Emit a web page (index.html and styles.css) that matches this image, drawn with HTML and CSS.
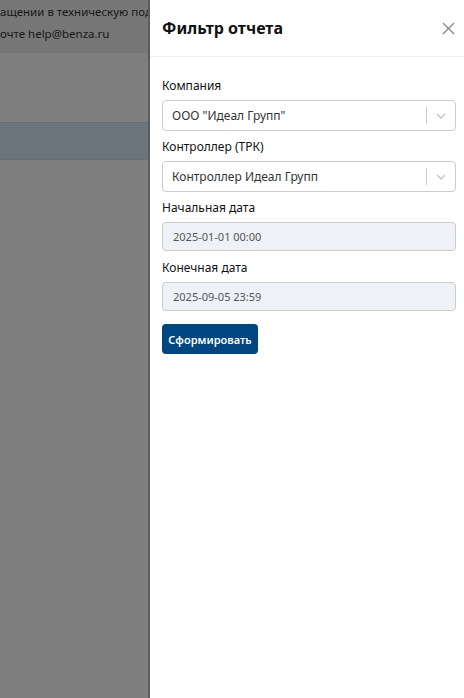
FILE: index.html
```html
<!DOCTYPE html>
<html lang="ru">
<head>
<meta charset="utf-8">
<link rel="stylesheet" href="styles.css">
</head>
<body>
<div class="page">
  <div class="notice">
    <div class="notice-line">ащении в техническую под</div>
    <div class="notice-line">очте help@benza.ru</div>
  </div>
  <div class="page-gap"></div>
  <div class="page-row"></div>
</div>
<div class="overlay"></div>
<aside class="drawer">
  <header class="drawer-head">
    <h1 class="drawer-title">Фильтр отчета</h1>
    <button class="close" aria-label="Закрыть">
      <svg width="14" height="14" viewBox="0 0 14 14"><path d="M1 1L13 13M13 1L1 13" stroke="#8c8c8c" stroke-width="1.5" fill="none"/></svg>
    </button>
  </header>
  <form class="drawer-body">
    <div class="field">
      <label class="label">Компания</label>
      <div class="select">
        <span class="select-value">ООО "Идеал Групп"</span>
        <span class="select-sep"></span>
        <span class="select-arrow"><svg width="10" height="6" viewBox="0 0 10 6"><path d="M1 1L5 5L9 1" stroke="#c4c4c4" stroke-width="1.3" fill="none"/></svg></span>
      </div>
    </div>
    <div class="field">
      <label class="label">Контроллер (ТРК)</label>
      <div class="select">
        <span class="select-value">Контроллер Идеал Групп</span>
        <span class="select-sep"></span>
        <span class="select-arrow"><svg width="10" height="6" viewBox="0 0 10 6"><path d="M1 1L5 5L9 1" stroke="#c4c4c4" stroke-width="1.3" fill="none"/></svg></span>
      </div>
    </div>
    <div class="field">
      <label class="label">Начальная дата</label>
      <div class="input">2025-01-01 00:00</div>
    </div>
    <div class="field">
      <label class="label">Конечная дата</label>
      <div class="input">2025-09-05 23:59</div>
    </div>
    <div class="actions">
      <button type="button" class="submit">Сформировать</button>
    </div>
  </form>
</aside>
</body>
</html>
```
FILE: styles.css
```css
* { box-sizing: border-box; }
html, body { margin: 0; padding: 0; height: 100%; }
body {
  font-family: "Noto Sans", "Open Sans", sans-serif;
  background: #ffffff;
  overflow: hidden;
  position: relative;
}
.page { display: flex; flex-direction: column; width: 148px; }
.notice {
  background: #eeeeee;
  height: 53px;
  padding-top: 1px;
  color: #333333;
  font-size: 11.5px;
  line-height: 22px;
}
.notice-line {
  white-space: nowrap;
  overflow: hidden;
}
.page-gap { height: 69px; }
.page-row { height: 38px; background: #d8e8f8; border-top: 1px solid #cfdbe8; border-bottom: 1px solid #cfdbe8; }
.overlay {
  position: absolute;
  inset: 0;
  background: rgba(0, 0, 0, 0.5);
}
.drawer {
  position: absolute;
  top: 0;
  right: 0;
  bottom: 0;
  width: 316px;
  background: #ffffff;
  border-left: 2px solid #5c5c5c;
  display: flex;
  flex-direction: column;
}
.drawer-head {
  height: 57px;
  border-bottom: 1px solid #f0f0f0;
  display: flex;
  align-items: center;
  justify-content: space-between;
  padding: 0 9px 0 12px;
}
.drawer-title {
  margin: 0;
  font-size: 16px;
  font-weight: 700;
  color: #111111;
}
.close {
  background: none;
  border: 0;
  padding: 0;
  width: 13px;
  height: 13px;
  display: flex;
  cursor: pointer;
}
.close svg { width: 13px; height: 13px; }
.drawer-body {
  padding: 20px 8px 0 12px;
  display: flex;
  flex-direction: column;
}
.field { display: flex; flex-direction: column; }
.label {
  font-size: 12px;
  color: #111111;
  line-height: 17px;
  height: 23px;
}
.select {
  height: 31px;
  border: 1px solid #cccccc;
  border-radius: 4px;
  display: flex;
  align-items: center;
  padding-left: 9px;
  margin-bottom: 7px;
}
.select-value { flex: 1; font-size: 12px; color: #333333; }
.select-sep { width: 1px; height: 17px; background: #cccccc; }
.select-arrow { width: 28px; display: flex; justify-content: center; align-items: center; }
.input {
  height: 29px;
  border: 1px solid #cccccc;
  border-radius: 4px;
  background: #eef1f5;
  font-size: 11px;
  color: #555555;
  display: flex;
  align-items: center;
  padding-left: 10px;
  margin-bottom: 8px;
}
.actions { padding-top: 5px; }
.submit {
  background: #004680;
  color: #ffffff;
  border: 0;
  border-radius: 4px;
  height: 30px;
  width: 96px;
  font-family: inherit;
  font-size: 11px;
  font-weight: 600;
  padding: 0;
}
```
